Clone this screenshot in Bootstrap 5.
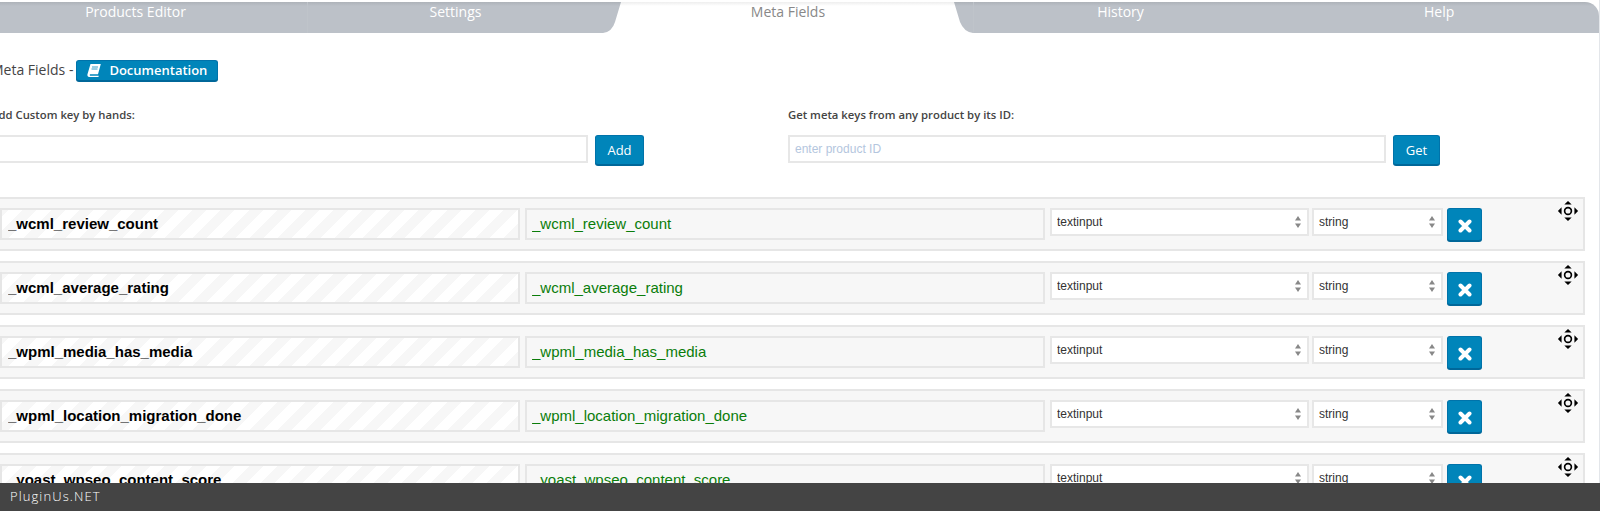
<!DOCTYPE html>
<html lang="en">
<head>
<meta charset="utf-8">
<title>Meta Fields</title>
<link href="https://cdn.jsdelivr.net/npm/bootstrap@5.3.0/dist/css/bootstrap.min.css" rel="stylesheet">
<style>
html,body{height:511px;overflow:hidden;background:#fff}
body{font-family:"Open Sans",sans-serif;color:#444}
.pg-wrap{margin-left:-36px;width:1636px;height:511px;border-right:1px solid #e3e6ea;overflow:hidden}
.tab-bar{margin-top:2px;height:31px;background:linear-gradient(#aeb3b9 0,#bcc1c8 4px,#bcc1c8 100%);border-top-right-radius:14px;overflow:hidden}
.tab-item{font-size:14px;line-height:20px;color:#fff;text-align:center;height:31px;flex:none}
.tab-one{width:344px;border-right:1px solid #bfc4ca}
.tab-two{width:295px}
.tab-three{width:370px;color:#888;background:linear-gradient(#eee 0,#fff 4px);clip-path:path("M18 0 L351 0 L357 20 Q361 30 370 31 L0 31 Q9 30 12 20 Z")}
.tab-four{width:294px;border-left:1px solid #bfc4ca}
.tab-five{width:333px;text-align:left;padding-left:157px}
.body-area{padding-left:27px;width:1621px}
.head-line{margin-top:26px;height:22px;font-size:14px;line-height:22px;color:#444}
.wp-btn{background:#0085ba;border:1px solid #0073aa;border-bottom-color:#006799;box-shadow:0 1px 0 #006799;color:#fff;border-radius:3px;font-family:"Open Sans",sans-serif}
.wp-btn:hover{background:#0085ba;color:#fff}
.doc-btn{width:142px;height:21px;font-size:13px;font-weight:600;line-height:19px;padding:0;margin-left:3px}
.add-btn{height:30px;width:49px;font-size:13px;padding:0;line-height:28px}
.get-btn{width:47px}
.field-label{font-size:11.3px;font-weight:600;line-height:16px;color:#444;margin-bottom:12px}
.forms-row{margin-top:26px}
.left-form{width:653px;margin-right:144px}
.right-form{width:652px}
.form-gap{gap:7px}
.plain-input{height:28px;border:2px solid #e7e7e7;border-radius:0;font-family:"Liberation Sans",sans-serif;font-size:12px;padding:0 5px;background:#fff;box-shadow:none;color:#333;width:100%}
.plain-input::placeholder{color:#b4c6de}
.meta-row{position:relative;height:54px;margin-bottom:10px;background:#f7f7f7;border:2px solid #e6e6e6;padding:9px 0 0 7px;gap:5px;width:1594px}
.forms-row + .meta-row{margin-top:32px}
.key-input,.val-input{height:32px;border:2px solid #e6e6e6;border-radius:0;font-family:"Liberation Sans",sans-serif;font-size:15px;padding:0 5px 2px;box-shadow:none;flex:none}
.key-input{width:520px;padding-left:6px;font-weight:700;color:#000;background:repeating-linear-gradient(-45deg,#f7f7f7 0,#f7f7f7 10px,#fff 10px,#fff 20px)}
.key-input:focus{background:repeating-linear-gradient(-45deg,#f7f7f7 0,#f7f7f7 10px,#fff 10px,#fff 20px);box-shadow:none;border-color:#e6e6e6}
.val-input{width:520px;color:#0a7d0a}
.val-input,.val-input:read-only{background:#f7f7f7}
.type-select{height:28px;border:2px solid #e7e7e7;border-radius:0;font-family:"Liberation Sans",sans-serif;font-size:12px;line-height:20px;padding:0 20px 0 5px;color:#333;box-shadow:none;flex:none;background-color:#fff;background-image:url("data:image/svg+xml,%3Csvg xmlns='http://www.w3.org/2000/svg' width='6' height='12'%3E%3Cpath d='M3 0l3 4.500H0z' fill='%23888'/%3E%3Cpath d='M3 12L0 7.500h6z' fill='%23888'/%3E%3C/svg%3E");background-repeat:no-repeat;background-position:right 6px center;background-size:6px 12px}
.type-one{width:259px}
.type-two{width:131px;margin-left:-2px}
.del-btn{width:35px;height:33px;padding:0;margin-left:-1px;flex:none}
.move-ico{position:absolute;right:4px;top:1px}
.foot-bar{height:28px;background:#444;color:#fff;font-family:"Open Sans",sans-serif;font-weight:300;font-size:13px;letter-spacing:1.1px;line-height:27px;padding-left:10px}
</style>
</head>
<body>
<div class="pg-wrap">
  <nav class="tab-bar d-flex">
    <div class="tab-item tab-one">Products Editor</div>
    <div class="tab-item tab-two">Settings</div>
    <div class="tab-item tab-three">Meta Fields</div>
    <div class="tab-item tab-four">History</div>
    <div class="tab-item tab-five">Help</div>
  </nav>
  <main class="body-area">
    <div class="head-line d-flex align-items-center"><span>Meta Fields -</span>
      <a class="btn wp-btn doc-btn d-inline-flex align-items-center justify-content-center gap-2" href="#">
        <svg width="14" height="13" viewBox="0 0 14 13"><path fill="#fff" d="M3.500 0H13.800L11 10.300H3a1.100 1.100 0 0 0 0 1.400h8.800L11.400 13H2.200C1 13 .2 12 .4 10.600Z"/><path fill="none" stroke="#0085ba" stroke-width=".8" d="M5 3h6M4.500 5h6"/></svg>
        Documentation</a></div>
    <div class="forms-row d-flex">
      <div class="left-form">
        <div class="field-label">Add Custom key by hands:</div>
        <div class="d-flex form-gap align-items-start"><input class="form-control plain-input flex-grow-1" type="text"><button class="btn wp-btn add-btn flex-shrink-0" type="button">Add</button></div>
      </div>
      <div class="right-form">
        <div class="field-label">Get meta keys from any product by its ID:</div>
        <div class="d-flex form-gap align-items-start"><input class="form-control plain-input flex-grow-1" type="text" placeholder="enter product ID"><button class="btn wp-btn add-btn get-btn flex-shrink-0" type="button">Get</button></div>
      </div>
    </div>
    <div class="meta-row d-flex align-items-start">
      <input class="form-control key-input" value="_wcml_review_count" readonly>
      <input class="form-control val-input" value="_wcml_review_count" readonly>
      <select class="form-select type-select type-one"><option>textinput</option></select>
      <select class="form-select type-select type-two"><option>string</option></select>
      <button class="btn wp-btn del-btn" type="button"><svg width="14" height="14" viewBox="0 0 14 14"><path stroke="#fff" stroke-width="4" stroke-linecap="round" d="M2.500 2.500l9 9M11.500 2.500l-9 9"/></svg></button>
      <svg class="move-ico" width="22" height="22" viewBox="0 0 24 24"><circle cx="12" cy="12" r="3.700" fill="none" stroke="#000" stroke-width="1.800"/><path d="M12 1l4 4H8zM12 23l-4-4h8zM1 12l4-4v8zM23 12l-4 4V8z"/></svg>
    </div>
    <div class="meta-row d-flex align-items-start">
      <input class="form-control key-input" value="_wcml_average_rating" readonly>
      <input class="form-control val-input" value="_wcml_average_rating" readonly>
      <select class="form-select type-select type-one"><option>textinput</option></select>
      <select class="form-select type-select type-two"><option>string</option></select>
      <button class="btn wp-btn del-btn" type="button"><svg width="14" height="14" viewBox="0 0 14 14"><path stroke="#fff" stroke-width="4" stroke-linecap="round" d="M2.500 2.500l9 9M11.500 2.500l-9 9"/></svg></button>
      <svg class="move-ico" width="22" height="22" viewBox="0 0 24 24"><circle cx="12" cy="12" r="3.700" fill="none" stroke="#000" stroke-width="1.800"/><path d="M12 1l4 4H8zM12 23l-4-4h8zM1 12l4-4v8zM23 12l-4 4V8z"/></svg>
    </div>
    <div class="meta-row d-flex align-items-start">
      <input class="form-control key-input" value="_wpml_media_has_media" readonly>
      <input class="form-control val-input" value="_wpml_media_has_media" readonly>
      <select class="form-select type-select type-one"><option>textinput</option></select>
      <select class="form-select type-select type-two"><option>string</option></select>
      <button class="btn wp-btn del-btn" type="button"><svg width="14" height="14" viewBox="0 0 14 14"><path stroke="#fff" stroke-width="4" stroke-linecap="round" d="M2.500 2.500l9 9M11.500 2.500l-9 9"/></svg></button>
      <svg class="move-ico" width="22" height="22" viewBox="0 0 24 24"><circle cx="12" cy="12" r="3.700" fill="none" stroke="#000" stroke-width="1.800"/><path d="M12 1l4 4H8zM12 23l-4-4h8zM1 12l4-4v8zM23 12l-4 4V8z"/></svg>
    </div>
    <div class="meta-row d-flex align-items-start">
      <input class="form-control key-input" value="_wpml_location_migration_done" readonly>
      <input class="form-control val-input" value="_wpml_location_migration_done" readonly>
      <select class="form-select type-select type-one"><option>textinput</option></select>
      <select class="form-select type-select type-two"><option>string</option></select>
      <button class="btn wp-btn del-btn" type="button"><svg width="14" height="14" viewBox="0 0 14 14"><path stroke="#fff" stroke-width="4" stroke-linecap="round" d="M2.500 2.500l9 9M11.500 2.500l-9 9"/></svg></button>
      <svg class="move-ico" width="22" height="22" viewBox="0 0 24 24"><circle cx="12" cy="12" r="3.700" fill="none" stroke="#000" stroke-width="1.800"/><path d="M12 1l4 4H8zM12 23l-4-4h8zM1 12l4-4v8zM23 12l-4 4V8z"/></svg>
    </div>
    <div class="meta-row d-flex align-items-start">
      <input class="form-control key-input" value="_yoast_wpseo_content_score" readonly>
      <input class="form-control val-input" value="_yoast_wpseo_content_score" readonly>
      <select class="form-select type-select type-one"><option>textinput</option></select>
      <select class="form-select type-select type-two"><option>string</option></select>
      <button class="btn wp-btn del-btn" type="button"><svg width="14" height="14" viewBox="0 0 14 14"><path stroke="#fff" stroke-width="4" stroke-linecap="round" d="M2.500 2.500l9 9M11.500 2.500l-9 9"/></svg></button>
      <svg class="move-ico" width="22" height="22" viewBox="0 0 24 24"><circle cx="12" cy="12" r="3.700" fill="none" stroke="#000" stroke-width="1.800"/><path d="M12 1l4 4H8zM12 23l-4-4h8zM1 12l4-4v8zM23 12l-4 4V8z"/></svg>
    </div>
  </main>
</div>
<footer class="foot-bar fixed-bottom">PluginUs.NET</footer>
<script src="https://cdn.jsdelivr.net/npm/bootstrap@5.3.0/dist/js/bootstrap.bundle.min.js"></script>
</body>
</html>
